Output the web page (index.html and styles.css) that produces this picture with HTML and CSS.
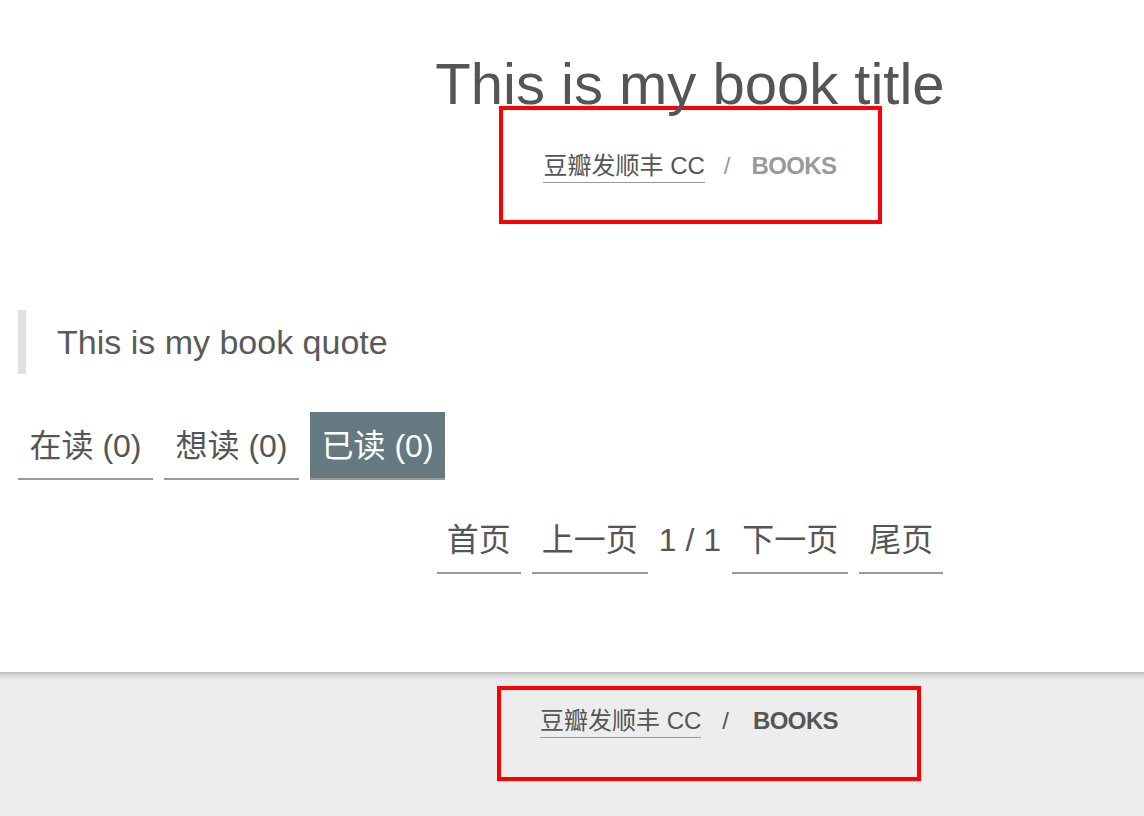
FILE: index.html
```html
<!DOCTYPE html>
<html lang="zh-CN">
<head>
<meta charset="utf-8">
<title>This is my book title</title>
<link rel="stylesheet" href="styles.css">
</head>
<body>
<div class="page">
  <header class="header centered">
    <h1 class="title">This is my book title</h1>
    <nav class="crumbs crumbs-top">
      <a class="crumb-link" href="#">豆瓣发顺丰 CC</a><span class="crumb-sep">/</span><span class="crumb-current">BOOKS</span>
    </nav>
  </header>
  <main class="content">
    <blockquote class="quote">This is my book quote</blockquote>
    <div class="tabs">
      <a class="tab" href="#">在读 (0)</a>
      <a class="tab" href="#">想读 (0)</a>
      <a class="tab tab-active" href="#">已读 (0)</a>
    </div>
    <div class="pager centered">
      <a class="pager-item" href="#">首页</a>
      <a class="pager-item" href="#">上一页</a>
      <span class="pager-count">1 / 1</span>
      <a class="pager-item" href="#">下一页</a>
      <a class="pager-item" href="#">尾页</a>
    </div>
  </main>
</div>
<footer class="footer">
  <div class="footer-inner">
    <nav class="crumbs crumbs-bottom">
      <a class="crumb-link" href="#">豆瓣发顺丰 CC</a><span class="crumb-sep">/</span><span class="crumb-current">BOOKS</span>
    </nav>
  </div>
</footer>
</body>
</html>
```

FILE: styles.css
```css
html, body {
  margin: 0;
  padding: 0;
  background: #fff;
}

body {
  font-family: "Liberation Sans", "Noto Sans CJK SC", sans-serif;
  color: #555;
}

a {
  color: inherit;
  text-decoration: none;
}

.page {
  padding: 0 0 98px 18px;
}

/* centred rows sit on the layout's centre line (x = 690) */
.centered {
  padding-left: 218px;
}

.title {
  margin: 52px 0 0;
  font-size: 58px;
  line-height: 64px;
  font-weight: normal;
  text-align: center;
  color: #555;
}

.crumbs {
  display: flex;
  align-items: baseline;
  box-sizing: border-box;
  border: 4px solid #ff0000;
  font-size: 24px;
  line-height: 27px;
}

.crumbs-top {
  width: 383px;
  margin: -10px auto 0;
  padding: 42px 0 37px;
  justify-content: center;
}

.crumb-link {
  display: block;
  padding-bottom: 3px;
  border-bottom: 1.5px solid #999;
  color: #555;
}

.crumb-sep {
  margin: 0 21px 0 19px;
}

.crumb-current {
  font-weight: bold;
  letter-spacing: -0.6px;
}

.crumbs-top .crumb-sep,
.crumbs-top .crumb-current {
  color: #999;
}

.quote {
  margin: 86px 0 0;
  padding-left: 31px;
  border-left: 8px solid #e0e0e0;
  font-size: 34px;
  line-height: 64px;
  color: #5a5a5a;
}

.tabs {
  display: flex;
  gap: 11px;
  margin-top: 38px;
}

.tab {
  font-size: 32px;
  line-height: 64px;
  padding: 2px 11.5px 0;
  border-bottom: 2px solid #999;
  color: #555;
}

.tab-active {
  background: #647a80;
  color: #fff;
}

.pager {
  display: flex;
  justify-content: center;
  gap: 11px;
  margin-top: 26px;
}

.pager-item,
.pager-count {
  font-size: 32px;
  line-height: 64px;
  padding: 2px 10px 0;
  color: #555;
}

.pager-item {
  border-bottom: 2px solid #999;
}

.pager-count {
  padding: 2px 0 0;
}

.footer {
  background: linear-gradient(to bottom, #bcbcbc 0, #dcdcdc 4px, #e9e9e9 8px, #ededed 12px);
  padding: 14px 0 40px;
}

.footer-inner {
  padding-left: 236px;
}

.crumbs-bottom {
  width: 424px;
  height: 95px;
  margin-left: calc(50% - 193px);
  padding: 17px 0 0 39px;
  justify-content: flex-start;
  color: #555;
}

.crumbs-bottom .crumb-sep {
  margin: 0 24px 0 21px;
}
```
